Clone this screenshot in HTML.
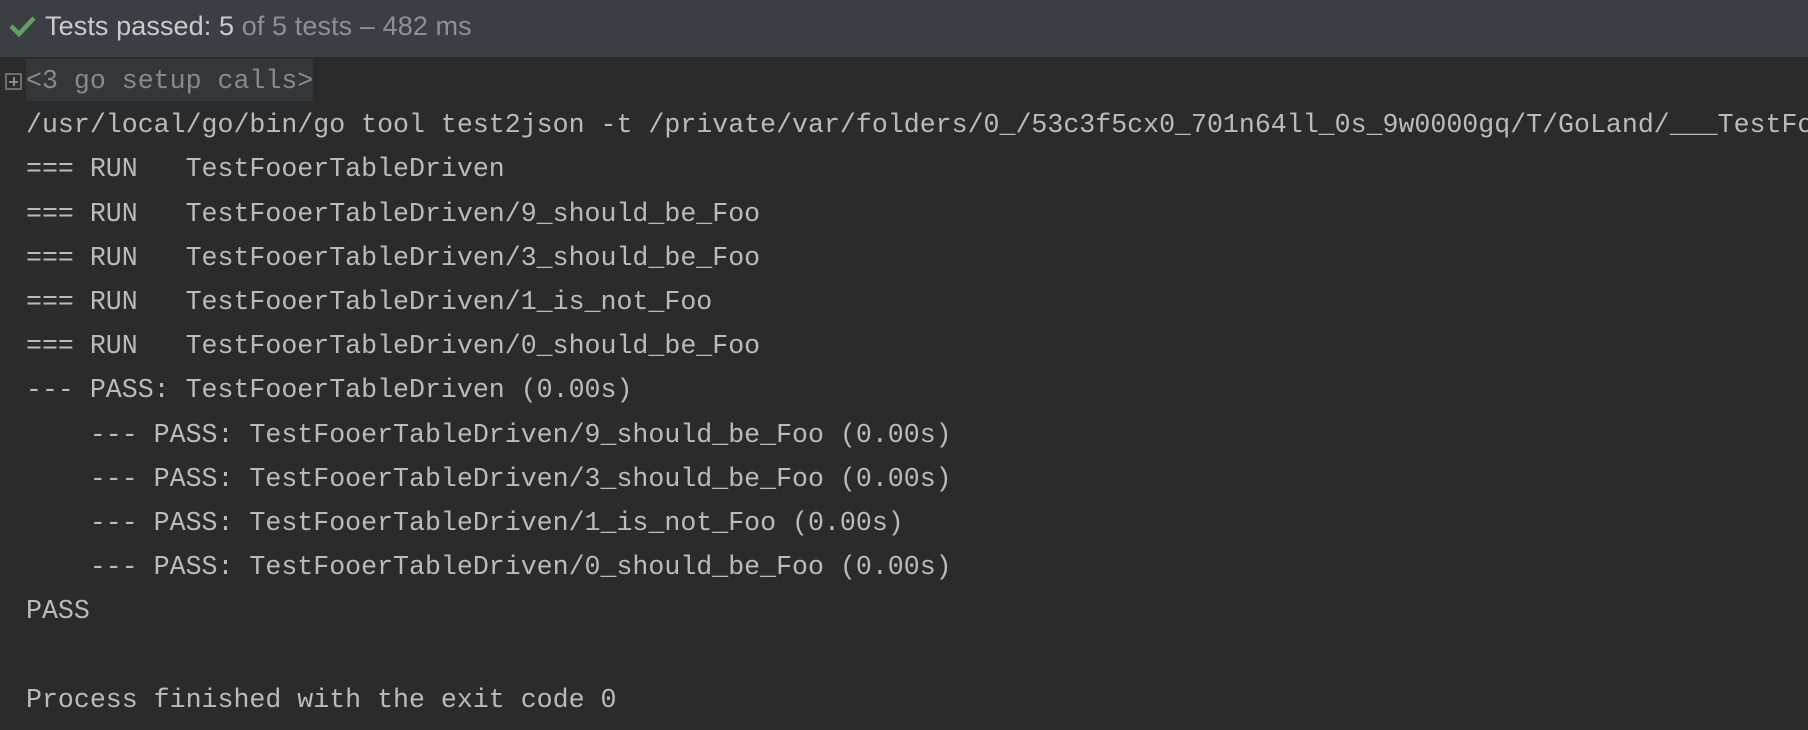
<!DOCTYPE html>
<html><head><meta charset="utf-8"><style>
html,body{margin:0;padding:0;width:1808px;height:730px;overflow:hidden;background:#2b2b2b}
.hdr{position:absolute;left:0;top:0;width:1808px;height:57px;background:#3b3e42;}
.hdr .t{position:absolute;left:45px;top:11px;font:27px "Liberation Sans",sans-serif;letter-spacing:0.1px;color:#c9cbce;white-space:pre}
.hdr .g{color:#8d9094}
.hdr svg{position:absolute;left:9px;top:15px}
.wrap{position:absolute;left:0;top:0;width:1808px;height:730px;overflow:hidden}
.con{position:absolute;left:26px;top:59px;font:26.6px/44.2px "Liberation Mono",monospace;color:#bbbbbb;white-space:pre}
.hl{position:absolute;left:26px;top:59px;width:287px;height:42px;background:#353638}
.fold{position:absolute;left:5px;top:73px;width:17px;height:17px;border:2px solid #6d6d6d;box-sizing:border-box}
.fold:before{content:"";position:absolute;left:2px;top:5.5px;width:9px;height:2px;background:#8a8a8a}
.fold:after{content:"";position:absolute;left:5.5px;top:2px;width:2px;height:9px;background:#8a8a8a}
.gr{color:#8a8a8a}
</style></head><body>
<div class="wrap">
<div class="hdr"><svg width="27" height="22" viewBox="0 0 27 22"><path d="M2 11 L10 19 L25 3" fill="none" stroke="#5fa35f" stroke-width="4.5"/></svg><div class="t">Tests passed: 5<span class="g"> of 5 tests – 482 ms</span></div></div>
<div class="hl"></div><div class="fold"></div>
<div class="con"><span class="gr">&lt;3 go setup calls&gt;</span>
/usr/local/go/bin/go tool test2json -t /private/var/folders/0_/53c3f5cx0_701n64ll_0s_9w0000gq/T/GoLand/___TestFo
=== RUN   TestFooerTableDriven
=== RUN   TestFooerTableDriven/9_should_be_Foo
=== RUN   TestFooerTableDriven/3_should_be_Foo
=== RUN   TestFooerTableDriven/1_is_not_Foo
=== RUN   TestFooerTableDriven/0_should_be_Foo
--- PASS: TestFooerTableDriven (0.00s)
    --- PASS: TestFooerTableDriven/9_should_be_Foo (0.00s)
    --- PASS: TestFooerTableDriven/3_should_be_Foo (0.00s)
    --- PASS: TestFooerTableDriven/1_is_not_Foo (0.00s)
    --- PASS: TestFooerTableDriven/0_should_be_Foo (0.00s)
PASS

Process finished with the exit code 0</div>
</div>
</body></html>
